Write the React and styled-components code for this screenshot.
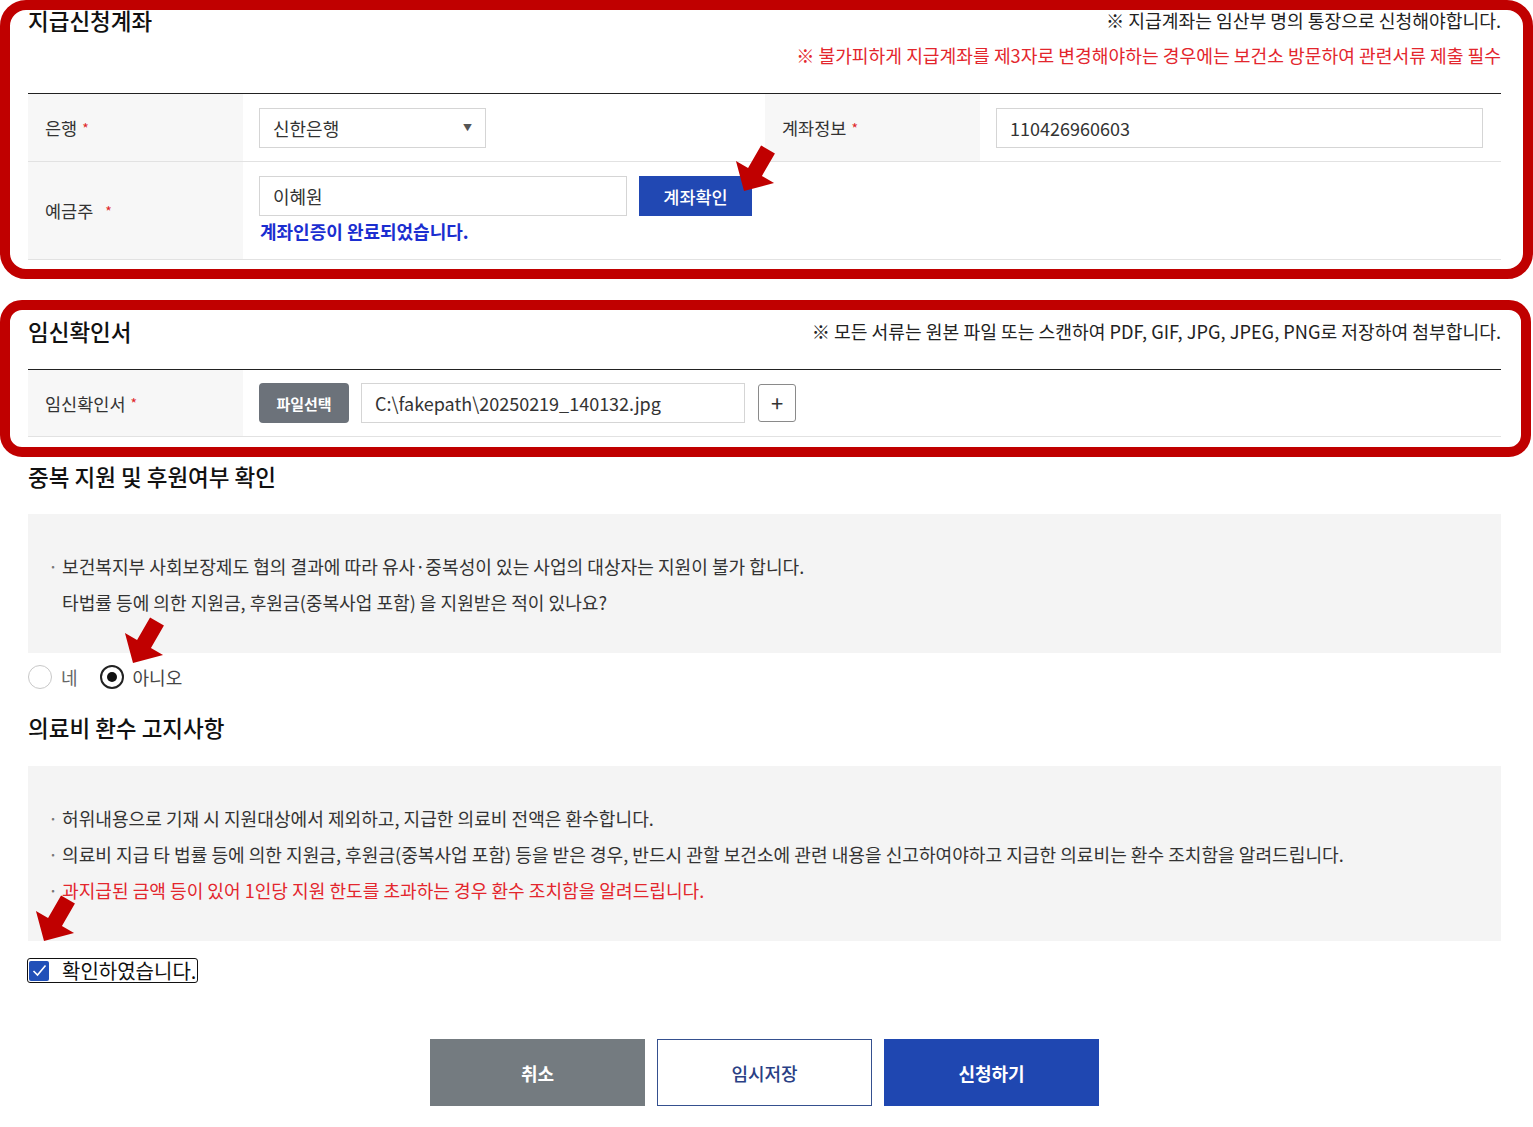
import React from "react";
import styled, { createGlobalStyle } from "styled-components";

const GlobalStyle = createGlobalStyle`
  * { box-sizing: border-box; }
  html, body {
    margin: 0;
    padding: 0;
    background: #fff;
    overflow: hidden;
  }
  body {
    font-family: "Noto Sans CJK KR", "Noto Sans", sans-serif;
    color: #333;
  }
`;

const Page = styled.div`
  position: relative;
  width: 1533px;
  height: 1127px;
  padding: 0 32px 0 28px;
`;

const Section = styled.section`
  position: relative;
  margin-top: ${(p) => p.$top || 0}px;
  padding-bottom: ${(p) => p.$bottom || 0}px;
`;

// red annotation frame drawn over a section
const Marker = styled.div`
  position: absolute;
  top: 0;
  bottom: 0;
  left: -28px;
  right: ${(p) => p.$right}px;
  border: 10px solid #c00000;
  border-radius: ${(p) => p.$radius}px;
  pointer-events: none;
`;

const Head = styled.div`
  display: flex;
  justify-content: space-between;
  align-items: flex-start;
  padding: ${(p) => p.$pad};
`;

const Title = styled.h2`
  margin: 0;
  font-size: 22.5px;
  line-height: 24px;
  font-weight: 500;
  color: #111;
`;

const Notes = styled.div`
  text-align: right;
`;

const Note = styled.p`
  margin: 0;
  font-size: 18.2px;
  line-height: 24px;
  color: ${(p) => (p.$red ? "#e3262d" : "#222")};
  & + & {
    margin-top: 11px;
  }
`;

const Table = styled.div`
  display: grid;
  grid-template-columns: 215px 522px 215px 1fr;
  border-top: 1px solid #222;
`;

const Label = styled.div`
  height: ${(p) => p.$h}px;
  display: flex;
  align-items: center;
  padding-left: 17px;
  background: #f7f7f7;
  border-bottom: 1px solid #e2e2e2;
  font-size: 17.5px;
  color: #333;
`;

const Req = styled.span`
  color: #e0262a;
  font-size: 14px;
  margin-left: ${(p) => p.$gap || 5}px;
`;

const Cell = styled.div`
  grid-column: span ${(p) => p.$span || 1};
  height: ${(p) => p.$h}px;
  display: flex;
  flex-direction: column;
  justify-content: ${(p) => (p.$top ? "flex-start" : "center")};
  padding: ${(p) => (p.$top ? "14px 16px 0" : "0 16px")};
  border-bottom: 1px solid #e2e2e2;
`;

const Field = styled.div`
  display: flex;
  align-items: center;
  gap: ${(p) => p.$gap || 12}px;
`;

const Input = styled.input`
  width: ${(p) => p.$w};
  height: 40px;
  padding: 0 13px;
  border: 1px solid #d5d5d5;
  font-family: inherit;
  font-size: 18px;
  color: #333;
  background: #fff;
  outline: none;
`;

const SelectBox = styled.div`
  width: 227px;
  height: 40px;
  display: flex;
  align-items: center;
  justify-content: space-between;
  padding: 0 13px;
  border: 1px solid #d5d5d5;
  font-size: 18px;
  color: #333;
  span {
    font-size: 9px;
    color: #555;
  }
`;

const BlueButton = styled.button`
  width: 113px;
  height: 40px;
  border: 0;
  background: #2148b3;
  color: #fff;
  font-family: inherit;
  font-size: 17.5px;
  font-weight: 500;
`;

const Done = styled.p`
  margin: 4px 0 0 1px;
  line-height: 22px;
  font-size: 18px;
  font-weight: 700;
  color: #1b2ed0;
`;

const FileButton = styled.button`
  width: 90px;
  height: 40px;
  border: 0;
  border-radius: 4px;
  background: #6c727a;
  color: #fff;
  font-family: inherit;
  font-size: 15px;
  font-weight: 700;
`;

const PlusButton = styled.button`
  width: 38px;
  height: 38px;
  margin-left: 1px;
  border: 1px solid #8a8a8a;
  border-radius: 3px;
  background: #fff;
  color: #333;
  font-family: inherit;
  font-size: 22px;
  line-height: 1;
  padding: 0 0 3px;
`;

const SubTitle = styled.h3`
  margin: ${(p) => p.$top}px 0 0;
  font-size: 22.5px;
  line-height: 28px;
  font-weight: 500;
  color: #111;
`;

const InfoBox = styled.div`
  margin-top: ${(p) => p.$top}px;
  background: #f4f4f4;
  padding: 34px 20px 33px;
`;

const InfoLine = styled.p`
  margin: 0;
  padding-left: ${(p) => (p.$indent ? 14 : 0)}px;
  line-height: 36px;
  font-size: 18.1px;
  color: ${(p) => (p.$red ? "#e3262d" : "#333")};
`;

const Bullet = styled.span`
  display: inline-block;
  width: 14px;
  color: #777;
`;

const Radios = styled.div`
  display: flex;
  align-items: center;
  gap: 22px;
  margin-top: 12px;
  height: 24px;
`;

const RadioItem = styled.label`
  display: flex;
  align-items: center;
  gap: 9px;
  font-size: 18px;
  color: ${(p) => (p.$on ? "#444" : "#666")};
`;

const RadioDot = styled.span`
  width: 24px;
  height: 24px;
  border-radius: 50%;
  border: ${(p) => (p.$on ? "2px solid #222" : "1px solid #c8c8c8")};
  background: #fff;
  display: inline-flex;
  align-items: center;
  justify-content: center;
  &::after {
    content: "";
    display: ${(p) => (p.$on ? "block" : "none")};
    width: 10px;
    height: 10px;
    border-radius: 50%;
    background: #111;
  }
`;

const CheckRow = styled.div`
  margin-top: 17px;
  height: 25px;
`;

const CheckLabel = styled.label`
  display: inline-flex;
  align-items: center;
  gap: 13px;
  height: 25px;
  margin-left: -1px;
  padding: 0 1px 0 1px;
  border: 1px solid #111;
  border-radius: 3px;
  font-size: 20px;
  color: #111;
`;

const CheckBox = styled.span`
  width: 20px;
  height: 20px;
  border-radius: 2px;
  background: #2150b8;
  display: flex;
  align-items: center;
  justify-content: center;
`;

const Actions = styled.div`
  display: flex;
  justify-content: center;
  gap: 12px;
  margin-top: 56px;
`;

const tones = {
  gray: { bg: "#747b80", fg: "#fff", line: "#747b80", weight: 700 },
  outline: { bg: "#fff", fg: "#2a3f85", line: "#35508f", weight: 500 },
  primary: { bg: "#1f47b1", fg: "#fff", line: "#1f47b1", weight: 700 },
};

const ActionButton = styled.button`
  width: 215px;
  height: 67px;
  border: 1px solid ${(p) => tones[p.$tone].line};
  background: ${(p) => tones[p.$tone].bg};
  color: ${(p) => tones[p.$tone].fg};
  font-family: inherit;
  font-size: 18px;
  font-weight: ${(p) => tones[p.$tone].weight};
`;

const ArrowWrap = styled.svg`
  position: absolute;
  left: ${(p) => p.$x}px;
  top: ${(p) => p.$y}px;
  pointer-events: none;
`;

// tip sits at (9,47) in the svg box
const Arrow = ({ tipX, tipY }) => (
  <ArrowWrap $x={tipX - 9} $y={tipY - 47} width="41" height="49" viewBox="0 0 41 49">
    <polygon
      points="9,47 39.05,38.95 26.93,31.95 39.93,9.43 26.07,1.43 13.07,23.95 0.95,16.95"
      fill="#c00000"
    />
  </ArrowWrap>
);

export default function App() {
  return (
    <>
      <GlobalStyle />
      <Page>
        <Section $bottom={19}>
          <Head $pad="8px 0 26px">
            <Title>지급신청계좌</Title>
            <Notes>
              <Note>※ 지급계좌는 임산부 명의 통장으로 신청해야합니다.</Note>
              <Note $red>
                ※ 불가피하게 지급계좌를 제3자로 변경해야하는 경우에는 보건소 방문하여 관련서류 제출 필수
              </Note>
            </Notes>
          </Head>
          <Table>
            <Label $h={68}>
              은행<Req>*</Req>
            </Label>
            <Cell $h={68}>
              <SelectBox>
                신한은행<span>▼</span>
              </SelectBox>
            </Cell>
            <Label $h={68}>
              계좌정보<Req>*</Req>
            </Label>
            <Cell $h={68}>
              <Input $w="487px" readOnly value="110426960603" />
            </Cell>
            <Label $h={98}>
              예금주<Req $gap={12}>*</Req>
            </Label>
            <Cell $h={98} $span={3} $top>
              <Field>
                <Input $w="368px" readOnly value="이혜원" />
                <BlueButton>계좌확인</BlueButton>
              </Field>
              <Done>계좌인증이 완료되었습니다.</Done>
            </Cell>
          </Table>
          <Marker $right={-32} $radius={26} />
        </Section>

        <Section $top={21} $bottom={20}>
          <Head $pad="19px 0 26px">
            <Title>임신확인서</Title>
            <Notes>
              <Note>※ 모든 서류는 원본 파일 또는 스캔하여 PDF, GIF, JPG, JPEG, PNG로 저장하여 첨부합니다.</Note>
            </Notes>
          </Head>
          <Table>
            <Label $h={67}>
              임신확인서<Req>*</Req>
            </Label>
            <Cell $h={67} $span={3}>
              <Field>
                <FileButton>파일선택</FileButton>
                <Input $w="384px" readOnly value="C:\fakepath\20250219_140132.jpg" />
                <PlusButton>+</PlusButton>
              </Field>
            </Cell>
          </Table>
          <Marker $right={-30} $radius={22} />
        </Section>

        <section>
          <SubTitle $top={5}>중복 지원 및 후원여부 확인</SubTitle>
          <InfoBox $top={24}>
            <InfoLine>
              <Bullet>·</Bullet>보건복지부 사회보장제도 협의 결과에 따라 유사·중복성이 있는 사업의 대상자는 지원이 불가 합니다.
            </InfoLine>
            <InfoLine $indent>타법률 등에 의한 지원금, 후원금(중복사업 포함) 을 지원받은 적이 있나요?</InfoLine>
          </InfoBox>
          <Radios>
            <RadioItem>
              <RadioDot />네
            </RadioItem>
            <RadioItem $on>
              <RadioDot $on />아니오
            </RadioItem>
          </Radios>
        </section>

        <section>
          <SubTitle $top={24}>의료비 환수 고지사항</SubTitle>
          <InfoBox $top={25}>
            <InfoLine>
              <Bullet>·</Bullet>허위내용으로 기재 시 지원대상에서 제외하고, 지급한 의료비 전액은 환수합니다.
            </InfoLine>
            <InfoLine>
              <Bullet>·</Bullet>의료비 지급 타 법률 등에 의한 지원금, 후원금(중복사업 포함) 등을 받은 경우, 반드시 관할 보건소에 관련 내용을 신고하여야하고 지급한 의료비는 환수 조치함을 알려드립니다.
            </InfoLine>
            <InfoLine $red>
              <Bullet>·</Bullet>과지급된 금액 등이 있어 1인당 지원 한도를 초과하는 경우 환수 조치함을 알려드립니다.
            </InfoLine>
          </InfoBox>
          <CheckRow>
            <CheckLabel>
              <CheckBox>
                <svg width="15" height="13" viewBox="0 0 15 13">
                  <path d="M1.5 7 L5.5 11 L13.5 1.5" fill="none" stroke="#fff" strokeWidth="1.6" />
                </svg>
              </CheckBox>
              확인하였습니다.
            </CheckLabel>
          </CheckRow>
        </section>

        <Actions>
          <ActionButton $tone="gray">취소</ActionButton>
          <ActionButton $tone="outline">임시저장</ActionButton>
          <ActionButton $tone="primary">신청하기</ActionButton>
        </Actions>

        <Arrow tipX={744} tipY={191} />
        <Arrow tipX={133} tipY={663} />
        <Arrow tipX={44} tipY={941} />
      </Page>
    </>
  );
}
